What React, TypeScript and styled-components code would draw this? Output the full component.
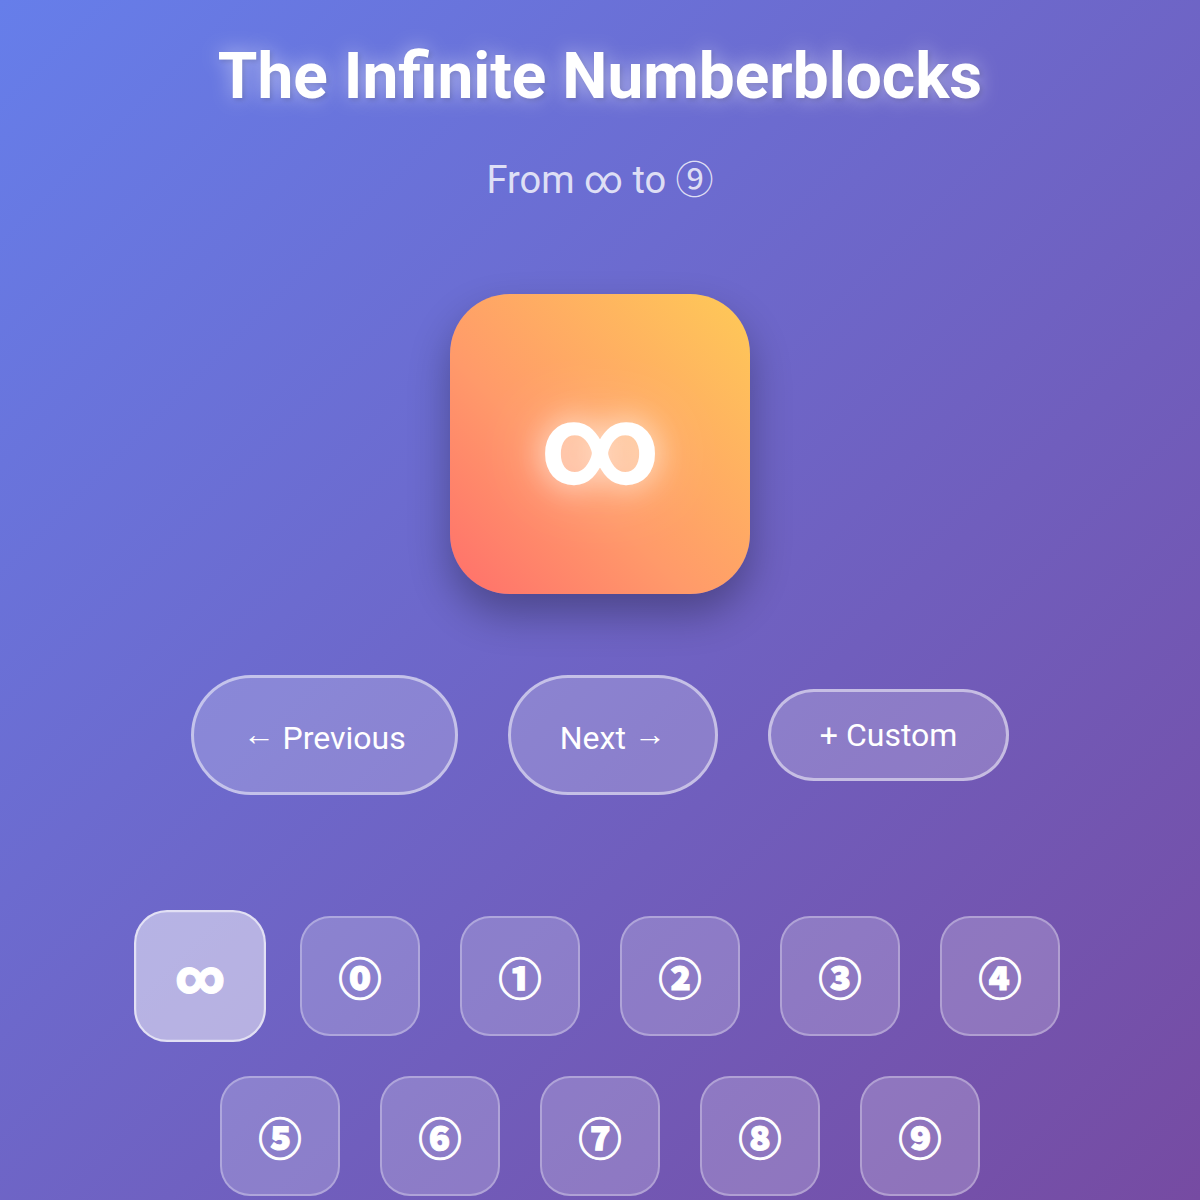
import React, { useState } from 'react'
import styled, { createGlobalStyle } from 'styled-components'

const GlobalStyle = createGlobalStyle`
    html, body {
        margin: 0;
        padding: 0;
    }
    body {
        font-family: Roboto, "Noto Sans CJK JP", sans-serif;
        background: linear-gradient(135deg, #667eea 0%, #764ba2 100%);
        min-height: 1200px;
        color: #fff;
        overflow: hidden;
    }
`

const Page = styled.div`
    display: flex;
    flex-direction: column;
    align-items: center;
    padding-top: 40px;
    height: 1200px;
    box-sizing: border-box;
`

const Title = styled.h1`
    margin: 0;
    font-size: 64px;
    font-weight: 700;
    line-height: 74px;
    text-shadow: 0 0 20px rgba(255, 255, 255, 0.5), 2px 2px 4px rgba(0, 0, 0, 0.15);
`

const Subtitle = styled.p`
    margin: 44px 0 0;
    font-size: 38px;
    line-height: 44px;
    color: rgba(255, 255, 255, 0.8);
`

const Block = styled.div`
    margin-top: 92px;
    width: 300px;
    height: 300px;
    border-radius: 60px;
    background: linear-gradient(45deg, #ff6f6b 0%, #ff9a6a 40%, #feca57 100%);
    box-shadow: 0 20px 40px rgba(0, 0, 0, 0.3);
    display: flex;
    align-items: center;
    justify-content: center;
`

const BlockSymbol = styled.span`
    font-size: 115px;
    font-weight: 700;
    line-height: 1;
    text-shadow: 0 0 30px rgba(255, 255, 255, 0.8), 0 0 70px rgba(255, 255, 255, 0.45);
`

const Controls = styled.div`
    margin-top: 81px;
    display: flex;
    align-items: center;
    gap: 50px;
`

const Button = styled.button<{ tall?: boolean }>`
    font-family: Roboto, sans-serif;
    font-size: 32px;
    color: #fff;
    background: rgba(255, 255, 255, 0.2);
    border: 3px solid rgba(255, 255, 255, 0.5);
    border-radius: 60px;
    padding: ${props => (props.tall ? '42px 49px 36px' : '25px 49px')};
    line-height: 36px;
    cursor: pointer;
`

const Arrow = styled.span`
    line-height: 0;
    vertical-align: 0.12em;
`

const Grid = styled.div`
    margin-top: 121px;
    max-width: 1000px;
    display: flex;
    flex-wrap: wrap;
    justify-content: center;
    gap: 40px;
`

const Tile = styled.div<{ active?: boolean }>`
    width: 120px;
    height: 120px;
    box-sizing: border-box;
    border-radius: 30px;
    background: ${props => (props.active ? 'rgba(255, 255, 255, 0.5)' : 'rgba(255, 255, 255, 0.2)')};
    border: 2px solid ${props => (props.active ? 'rgba(255, 255, 255, 0.6)' : 'rgba(255, 255, 255, 0.3)')};
    transform: ${props => (props.active ? 'scale(1.1)' : 'none')};
    display: flex;
    align-items: center;
    justify-content: center;
    font-family: Roboto, "Noto Sans CJK JP", sans-serif;
    font-size: 43px;
    font-weight: 900;
    -webkit-text-stroke: 1px #fff;
    color: #fff;
    cursor: pointer;
`

const numbers = ['∞', '⓪', '①', '②', '③', '④', '⑤', '⑥', '⑦', '⑧', '⑨']

const App = () => {
    const [current, setCurrent] = useState(0)

    return (
        <Page>
            <GlobalStyle />
            <Title>The Infinite Numberblocks</Title>
            <Subtitle>From ∞ to ⑨</Subtitle>
            <Block>
                <BlockSymbol>{numbers[current]}</BlockSymbol>
            </Block>
            <Controls>
                <Button tall onClick={() => setCurrent((current + numbers.length - 1) % numbers.length)}>
                    <Arrow>←</Arrow> Previous
                </Button>
                <Button tall onClick={() => setCurrent((current + 1) % numbers.length)}>
                    Next <Arrow>→</Arrow>
                </Button>
                <Button>+ Custom</Button>
            </Controls>
            <Grid>
                {numbers.map((n, i) => (
                    <Tile key={n} active={i === current} onClick={() => setCurrent(i)}>
                        {n}
                    </Tile>
                ))}
            </Grid>
        </Page>
    )
}

export default App
